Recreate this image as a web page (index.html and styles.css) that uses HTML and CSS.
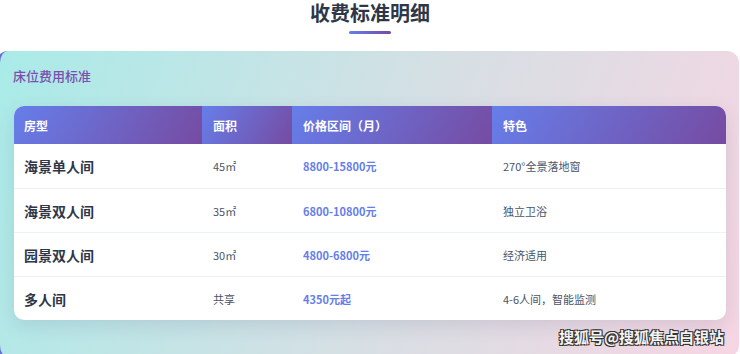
FILE: index.html
```html
<!DOCTYPE html>
<html lang="zh">
<head>
<meta charset="utf-8">
<link rel="stylesheet" href="styles.css">
</head>
<body>
<div class="page">
  <h1 class="title">收费标准明细</h1>
  <div class="title-bar"></div>
  <section class="card">
    <h2 class="card-label">床位费用标准</h2>
    <table class="fees">
      <colgroup>
        <col class="c1"><col class="c2"><col class="c3"><col class="c4">
      </colgroup>
      <thead>
        <tr><th>房型</th><th>面积</th><th>价格区间（月）</th><th>特色</th></tr>
      </thead>
      <tbody>
        <tr><td class="room">海景单人间</td><td>45㎡</td><td class="price">8800-15800元</td><td>270°全景落地窗</td></tr>
        <tr><td class="room">海景双人间</td><td>35㎡</td><td class="price">6800-10800元</td><td>独立卫浴</td></tr>
        <tr><td class="room">园景双人间</td><td>30㎡</td><td class="price">4800-6800元</td><td>经济适用</td></tr>
        <tr><td class="room">多人间</td><td>共享</td><td class="price">4350元起</td><td>4-6人间，智能监测</td></tr>
      </tbody>
    </table>
  </section>
  <div class="watermark">搜狐号@搜狐焦点白银站</div>
</div>
</body>
</html>
```

FILE: styles.css
```css
html, body {
  margin: 0;
  padding: 0;
  background: #ffffff;
}
body {
  width: 740px;
  height: 354px;
  overflow: hidden;
  font-family: "Noto Sans CJK SC", "Noto Sans", sans-serif;
}
.page {
  position: relative;
  height: 354px;
}
.title {
  margin: 0;
  font-size: 20px;
  line-height: 25px;
  font-weight: 700;
  color: #2d3748;
  text-align: center;
}
.title-bar {
  width: 42px;
  height: 3px;
  margin: 6px auto 0;
  border-radius: 2px;
  background: linear-gradient(90deg, #667eea, #764ba2);
}
.card {
  margin: 17px 1px 0 -4px;
  padding: 16px 13px 40px 14px;
  border-left: 4px solid #6a6fdc;
  border-radius: 12px;
  background: linear-gradient(110deg, #a9ebe8 0%, #d7dfe4 55%, #f6d5e2 100%);
  height: 306px;
  box-sizing: border-box;
}
.card-label {
  margin: 0 0 21px -1px;
  font-size: 13px;
  line-height: 18px;
  font-weight: 500;
  color: #7a4fae;
}
.fees {
  width: 712px;
  border-collapse: separate;
  border-spacing: 0;
  table-layout: fixed;
  background: #ffffff;
  border-radius: 10px;
  overflow: hidden;
  box-shadow: 0 6px 18px rgba(80, 80, 120, 0.14);
}
.c1 { width: 188px; }
.c2 { width: 90px; }
.c3 { width: 200px; }
.c4 { width: 234px; }
.fees th {
  height: 38px;
  padding: 0 0 0 11px;
  text-align: left;
  font-size: 12px;
  font-weight: 600;
  color: #ffffff;
  background: linear-gradient(120deg, #667eea 0%, #764ba2 100%);
}
.fees th:first-child {
  padding-left: 10px;
}
.fees td {
  height: 43px;
  padding: 0 0 0 11px;
  font-size: 11px;
  color: #4a5568;
  border-top: 1px solid #edf0f4;
}
.fees tbody tr:first-child td {
  border-top: none;
  height: 44px;
}
.fees td.room {
  padding-left: 10px;
  font-size: 14px;
  font-weight: 700;
  color: #2d3748;
}
.fees td.price {
  font-weight: 700;
  color: #667eea;
}
.watermark {
  position: absolute;
  right: 16px;
  bottom: 7px;
  font-size: 15px;
  font-weight: 700;
  line-height: 20px;
  color: #f4f4f4;
  text-shadow: 1px 1px 0 #333, -1px -1px 0 #333, 1px -1px 0 #333, -1px 1px 0 #333;
}
```
